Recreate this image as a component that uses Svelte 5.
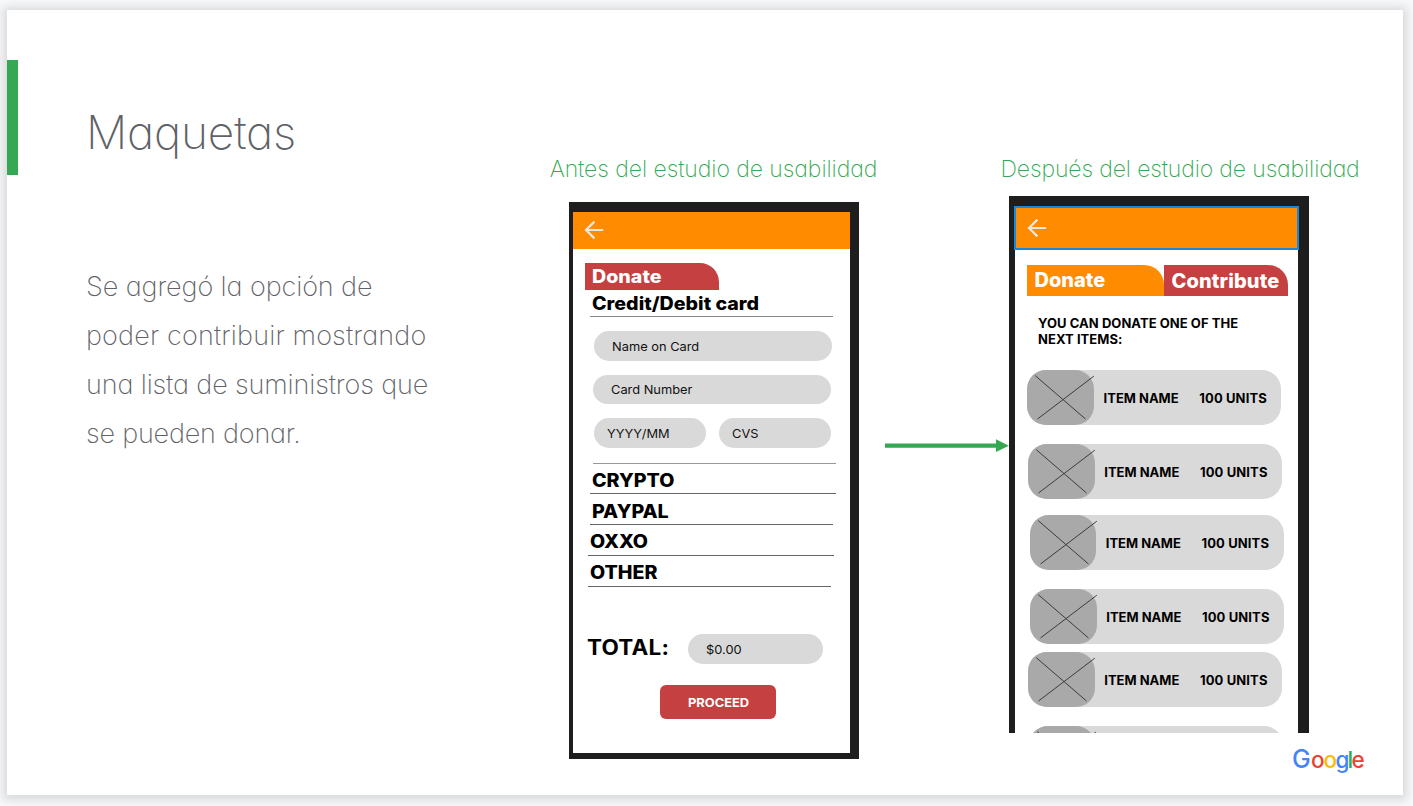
<script>
  const note = [
    { text: 'Se agregó la opción de', track: -0.1 },
    { text: 'poder contribuir mostrando', track: 0.15 },
    { text: 'una lista de suministros que', track: -0.13 },
    { text: 'se pueden donar.', track: -0.2 }
  ];
  const methods = [
    { name: 'CRYPTO', x: 17, w: 246 },
    { name: 'PAYPAL', x: 17, w: 243 },
    { name: 'OXXO', x: 15, w: 246 },
    { name: 'OTHER', x: 15, w: 243 }
  ];
  const items = [
    { gap: 0, x: 12.3 },
    { gap: 19, x: 13 },
    { gap: 16, x: 14.5 },
    { gap: 19, x: 15 },
    { gap: 8, x: 13 },
    { gap: 19, x: 13.5 }
  ];
</script>

{#snippet back()}
  <svg class="back" width="20" height="20" viewBox="0 0 20 20" fill="none" stroke="#ebe7e0" stroke-width="2.2">
    <path d="M19.2 10H1.8M10.4 1.6 2 10l8.4 8.4" />
  </svg>
{/snippet}

<main class="slide">
  <section class="intro">
    <div class="accent"></div>
    <div class="words">
      <h1>Maquetas</h1>
      <p class="note">
        {#each note as line}<span style="letter-spacing:{line.track}px">{line.text}</span>{/each}
      </p>
    </div>
  </section>

  <section class="before">
    <h2>Antes del estudio de usabilidad</h2>
    <div class="phone one">
      <div class="screen">
        <header class="bar">{@render back()}</header>
        <div class="tab"><span>Donate</span></div>
        <div class="open"><span>Credit/Debit card</span></div>
        <div class="fields">
          <div class="pill name"><span>Name on Card</span></div>
          <div class="pill number"><span>Card Number</span></div>
          <div class="pair">
            <div class="pill date"><span>YYYY/MM</span></div>
            <div class="pill cvs"><span>CVS</span></div>
          </div>
        </div>
        <div class="rule"></div>
        {#each methods as m}
          <div class="method" style="margin-left:{m.x}px;width:{m.w}px"><span>{m.name}</span></div>
        {/each}
        <div class="total">
          <strong>TOTAL:</strong>
          <div class="pill amount"><span>$0.00</span></div>
        </div>
        <div class="proceed"><span>PROCEED</span></div>
      </div>
    </div>
  </section>

  <div class="link">
    <svg width="124" height="14" viewBox="0 0 124 14" fill="#34a853">
      <path d="M0 4.5h111V.2L123.8 6.7 111 13.1V8.8H0z" />
    </svg>
  </div>

  <section class="after">
    <h2>Después del estudio de usabilidad</h2>
    <div class="phone two">
      <div class="screen">
        <header class="bar selected">{@render back()}</header>
        <nav class="tabs">
          <div class="donate">Donate</div>
          <div class="contribute">Contribute</div>
        </nav>
        <p class="lead">YOU CAN DONATE ONE OF THE<br />NEXT ITEMS:</p>
        {#each items as item, i}
          <div class="item" style="margin:{item.gap}px 0 0 {item.x}px">
            <div class="thumb">
              <svg width="70" height="55" viewBox="0 0 70 55" fill="none" stroke="#3c3c3c" stroke-width="1">
                <path d="M8.2 5.6 58.5 49M66.8 6.2 10.5 49" />
              </svg>
            </div>
            {#if i < items.length - 1}
              <b class="title">ITEM NAME</b>
              <b class="units">100 UNITS</b>
            {/if}
          </div>
        {/each}
      </div>
    </div>
    <svg class="logo" width="76" height="30" viewBox="0 0 76 30">
      <text y="21.6" x="0 18.9 31.4 43.6 55.6 59.4"><tspan class="cap" fill="#4285f4">G</tspan><tspan fill="#ea4335">o</tspan><tspan fill="#fbbc05">o</tspan><tspan fill="#4285f4">g</tspan><tspan fill="#34a853">l</tspan><tspan fill="#ea4335">e</tspan></text>
    </svg>
  </section>
</main>

<style>
  :global(body) {
    background: #f8f9fa;
    overflow: hidden;
  }
  :global(#app) {
    display: flow-root;
    min-height: 806px;
  }
  .slide {
    box-sizing: border-box;
    display: flex;
    width: 1396px;
    height: 785px;
    margin: 10px 0 0 7px;
    background: #fff;
    box-shadow: 0 1px 9px 4px rgba(60, 64, 67, 0.17);
    font-family: Inter, sans-serif;
  }
  h1, h2, p {
    margin: 0;
    font-weight: 200;
    white-space: nowrap;
  }
  h1, h2, .note {
    font-feature-settings: 'cv11';
  }
  .intro {
    display: flex;
    width: 536px;
    padding-top: 50px;
  }
  .accent {
    width: 11px;
    height: 115px;
    background: #34a853;
  }
  .words {
    padding: 42px 0 0 68px;
    color: #5f6368;
  }
  h1 {
    font-size: 46px;
    line-height: 60px;
    letter-spacing: -0.2px;
  }
  .note {
    margin-top: 100px;
    font-size: 27px;
    line-height: 49px;
  }
  .note span {
    display: block;
  }
  h2 {
    font-size: 23px;
    line-height: 24px;
    color: #34a853;
  }
  .before {
    display: flex;
    flex-direction: column;
    align-items: center;
    width: 342px;
    padding-top: 147px;
  }
  .before h2 {
    margin-left: -1px;
    letter-spacing: -0.06px;
  }
  .phone {
    box-sizing: border-box;
    background: #1e1e1e;
    overflow: hidden;
  }
  .screen {
    background: #fff;
    color: #000;
  }
  .bar {
    display: flex;
    align-items: center;
    box-sizing: border-box;
    background: #ff8b00;
  }
  .one {
    width: 290px;
    height: 557px;
    margin: 21px 0 0;
    padding: 9.5px 9.5px 6px 4px;
  }
  .one .screen {
    height: 541.5px;
  }
  .one .bar {
    height: 37.5px;
    padding-left: 11px;
  }
  .one span, .one strong {
    display: block;
    white-space: nowrap;
    transform: scaleX(1.08);
    transform-origin: left;
  }
  .tab, .open, .method {
    box-sizing: border-box;
    display: flex;
    align-items: center;
    font-size: 18.2px;
    font-weight: 800;
  }
  .tab {
    width: 134.5px;
    height: 27.5px;
    margin: 13.5px 0 0 11.5px;
    padding-left: 7.3px;
    border-top-right-radius: 19px;
    background: #c54141;
    color: #fff;
  }
  .open {
    width: 243px;
    height: 27px;
    margin-left: 17px;
    padding-left: 2.3px;
    border-bottom: 1px solid #888;
  }
  .fields {
    display: flex;
    flex-direction: column;
    gap: 14px;
    margin: 14px 0 0 20px;
  }
  .pair {
    display: flex;
    gap: 13px;
    margin-left: 1px;
  }
  .pill {
    box-sizing: border-box;
    display: flex;
    align-items: center;
    height: 29.5px;
    padding: 1.5px 0 0 18px;
    border-radius: 15px;
    background: #d9d9d9;
    font-size: 11.9px;
    color: #111;
  }
  .name {
    width: 238px;
    margin-left: 1px;
  }
  .number {
    width: 238px;
    padding-top: 0.5px;
  }
  .date {
    width: 112px;
    padding-left: 13px;
  }
  .cvs {
    width: 112px;
    padding-left: 13px;
  }
  .rule {
    width: 243px;
    height: 1px;
    margin: 15px 0 0 20px;
    background: #999;
  }
  .method {
    height: 30.8px;
    padding: 3px 0 0 2.3px;
    border-bottom: 1px solid #666;
  }
  .total {
    display: flex;
    margin: 47.5px 0 0 14px;
  }
  .total strong {
    width: 101px;
    font-size: 20.8px;
    font-weight: 700;
    line-height: 27px;
    letter-spacing: 0.2px;
  }
  .amount {
    width: 134.5px;
  }
  .proceed {
    display: flex;
    align-items: center;
    width: 88.5px;
    height: 34px;
    margin: 21.5px 0 0 87px;
    padding-left: 27.5px;
    border-radius: 6px;
    background: #c54141;
    color: #fff;
    font-size: 11.9px;
    font-weight: 700;
  }
  .link {
    width: 124px;
    padding-top: 429px;
    margin-top: -2px;
  }
  .after {
    width: 380px;
    padding-top: 147px;
  }
  .after h2 {
    margin-left: -8.5px;
    letter-spacing: -0.13px;
  }
  .two {
    width: 300px;
    height: 537px;
    margin-top: 15px;
    padding: 10px 11.5px 0 6px;
  }
  .two .screen {
    height: 527px;
  }
  .two .bar {
    height: 44px;
    margin: 0 -1px;
    padding-left: 11px;
  }
  .selected {
    border: 2px solid #1a86dc;
  }
  .two .back {
    margin-bottom: 1px;
  }
  .tabs {
    display: flex;
    width: 261px;
    height: 31px;
    margin: 14.5px 0 0 11.5px;
    color: #fff;
    font-size: 20px;
    font-weight: 800;
    line-height: 30px;
  }
  .donate, .contribute {
    box-sizing: border-box;
    padding-left: 8px;
    border-top-right-radius: 20px;
  }
  .donate {
    width: 137px;
    background: #ff8b00;
  }
  .contribute {
    width: 124px;
    padding-top: 1.5px;
    background: #c54141;
    letter-spacing: 0.12px;
  }
  .lead {
    height: 32px;
    margin: 19.5px 0 23px 23px;
    font-size: 13px;
    font-weight: 700;
    line-height: 16px;
    letter-spacing: 0.05px;
  }
  .item {
    display: flex;
    align-items: center;
    width: 254px;
    height: 55px;
    border-radius: 19px;
    background: #d9d9d9;
    font-size: 13px;
    white-space: nowrap;
  }
  .thumb {
    width: 66.5px;
    height: 55px;
    border-radius: 19px;
    background: #a9a9a9;
  }
  .thumb svg {
    display: block;
    overflow: visible;
  }
  .title {
    width: 86.5px;
    padding: 1px 0 0 9.8px;
  }
  .units {
    padding: 1px 0 0 9.2px;
    letter-spacing: 0.12px;
  }
  .logo {
    display: block;
    margin: 13px 0 0 283px;
    overflow: visible;
    font-size: 22.5px;
    font-weight: 500;
  }
  .cap {
    font-size: 25px;
  }
</style>
